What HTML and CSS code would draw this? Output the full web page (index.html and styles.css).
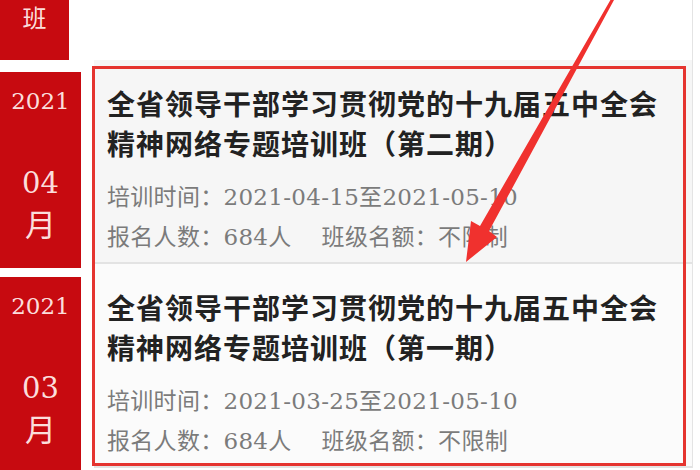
FILE: index.html
```html
<!DOCTYPE html>
<html lang="zh-CN">
<head>
<meta charset="utf-8">
<title>培训班列表</title>
<link rel="stylesheet" href="styles.css">
</head>
<body>
<div class="page">
  <div class="dates">
    <div class="date date-prev"><span class="prev-text">班</span></div>
    <div class="date">
      <div class="year">2021</div>
      <div class="month">04</div>
      <div class="yue">月</div>
    </div>
    <div class="date">
      <div class="year">2021</div>
      <div class="month">03</div>
      <div class="yue">月</div>
    </div>
  </div>
  <div class="cards">
    <div class="card card-prev"></div>
    <div class="card card-a">
      <div class="title">全省领导干部学习贯彻党的十九届五中全会<br>精神网络专题培训班（第二期）</div>
      <div class="info">培训时间：2021-04-15至2021-05-10</div>
      <div class="info">报名人数：684人<span class="gap"></span>班级名额：不限制</div>
    </div>
    <div class="card card-b">
      <div class="title">全省领导干部学习贯彻党的十九届五中全会<br>精神网络专题培训班（第一期）</div>
      <div class="info">培训时间：2021-03-25至2021-05-10</div>
      <div class="info">报名人数：684人<span class="gap"></span>班级名额：不限制</div>
    </div>
  </div>
  <div class="highlight"></div>
  <svg class="arrow" width="700" height="470" viewBox="0 0 700 470">
    <polygon fill="#f0312e" points="611,-1 614,0 489,231 497,237 466,262 471,221 480,226"/>
  </svg>
</div>
</body>
</html>
```

FILE: styles.css
```css
html, body {
  margin: 0;
  padding: 0;
  background: #ffffff;
}

.page {
  position: relative;
  width: 700px;
  height: 470px;
  overflow: hidden;
  display: grid;
  grid-template-columns: 81px 599px;
  column-gap: 13px;
  align-items: start;
}

.dates {
  display: flex;
  flex-direction: column;
}

.date {
  box-sizing: border-box;
  height: 196px;
  margin-bottom: 9px;
  padding-top: 14px;
  background: #c70a10;
  color: #fbdedc;
  text-align: center;
  font-family: "DejaVu Serif", "Noto Sans CJK SC", serif;
}

.date-prev {
  width: 69px;
  height: 60px;
  margin-bottom: 12px;
  padding-top: 2px;
}

.prev-text {
  display: block;
  font-family: "Noto Sans CJK SC", sans-serif;
  font-size: 24px;
  line-height: 30px;
}

.year {
  font-size: 23px;
  line-height: 30px;
}

.month {
  margin-top: 47px;
  font-size: 29px;
  line-height: 40px;
}

.yue {
  font-family: "Noto Sans CJK SC", sans-serif;
  font-size: 31px;
  line-height: 40px;
}

.cards {
  display: flex;
  flex-direction: column;
  border-right: 1px solid #e4e4e4;
}

.card {
  box-sizing: border-box;
  padding: 23px 13px 5px;
  border-bottom: 2px solid #e3e3e3;
}

.card-prev {
  height: 60px;
  padding: 0;
  border-bottom: none;
  background: #ffffff;
}

.card-a {
  background: #f6f6f6;
}

.card-b {
  background: #fbfbfb;
}

.title {
  font-family: "Noto Sans CJK SC", sans-serif;
  font-weight: 700;
  font-size: 28px;
  letter-spacing: 1px;
  line-height: 40px;
  color: #222222;
  white-space: nowrap;
}

.title + .info {
  margin-top: 14px;
}

.info {
  font-family: "DejaVu Serif", "Noto Sans CJK SC", serif;
  font-size: 23px;
  letter-spacing: 0.3px;
  line-height: 40px;
  color: #7b7b7b;
  white-space: nowrap;
}

.gap {
  display: inline-block;
  width: 30px;
}

.highlight {
  position: absolute;
  left: 92px;
  top: 66px;
  width: 594px;
  height: 400px;
  box-sizing: border-box;
  border: 3px solid #e5342f;
}

.arrow {
  position: absolute;
  left: 0;
  top: 0;
}
```
